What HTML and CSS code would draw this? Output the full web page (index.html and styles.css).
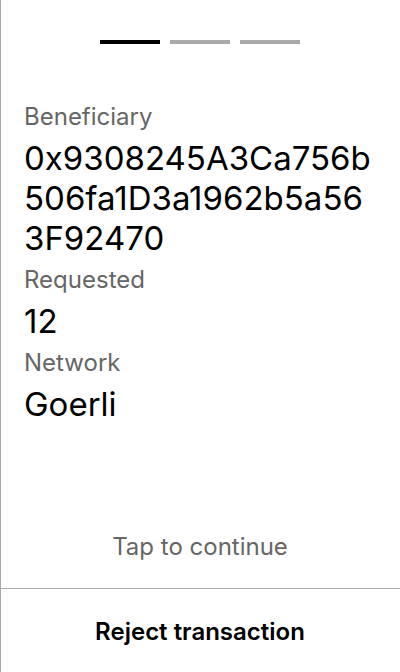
FILE: index.html
```html
<!DOCTYPE html>
<html>
<head>
<meta charset="utf-8">
<link rel="stylesheet" href="styles.css">
</head>
<body>
<div class="screen">
  <div class="steps">
    <span class="step active"></span>
    <span class="step"></span>
    <span class="step"></span>
  </div>
  <div class="details">
    <div class="label">Beneficiary</div>
    <div class="value">0x9308245A3Ca756b<br>506fa1D3a1962b5a56<br>3F92470</div>
    <div class="label">Requested</div>
    <div class="value">12</div>
    <div class="label">Network</div>
    <div class="value">Goerli</div>
  </div>
  <div class="tap">Tap to continue</div>
  <div class="reject">Reject transaction</div>
</div>
</body>
</html>
```
FILE: styles.css
```css
html, body {
  margin: 0;
  padding: 0;
  height: 100%;
  background: #fff;
}
body {
  font-family: Inter, "Noto Sans", sans-serif;
  color: #000;
}
.screen {
  box-sizing: border-box;
  height: 672px;
  border-left: 1px solid #aaa;
  display: flex;
  flex-direction: column;
}
.steps {
  display: flex;
  justify-content: center;
  gap: 10px;
  padding-top: 40px;
  margin-left: -1px;
}
.step {
  width: 60px;
  height: 4px;
  background: #aaa;
}
.step.active {
  background: #000;
}
.details {
  padding: 51px 24px 0 23px;
  display: flex;
  flex-direction: column;
}
.label {
  font-size: 24px;
  line-height: 43px;
  color: #666;
}
.value {
  font-size: 33px;
  line-height: 40px;
}
.tap {
  margin-top: auto;
  text-align: center;
  font-size: 24px;
  line-height: 28px;
  color: #666;
  padding-bottom: 27px;
  margin-left: -1px;
}
.reject {
  box-sizing: border-box;
  height: 84px;
  padding-top: 2px;
  border-top: 1px solid #aaa;
  margin-left: -1px;
  display: flex;
  align-items: center;
  justify-content: center;
  font-size: 24px;
  font-weight: 600;
}
```
